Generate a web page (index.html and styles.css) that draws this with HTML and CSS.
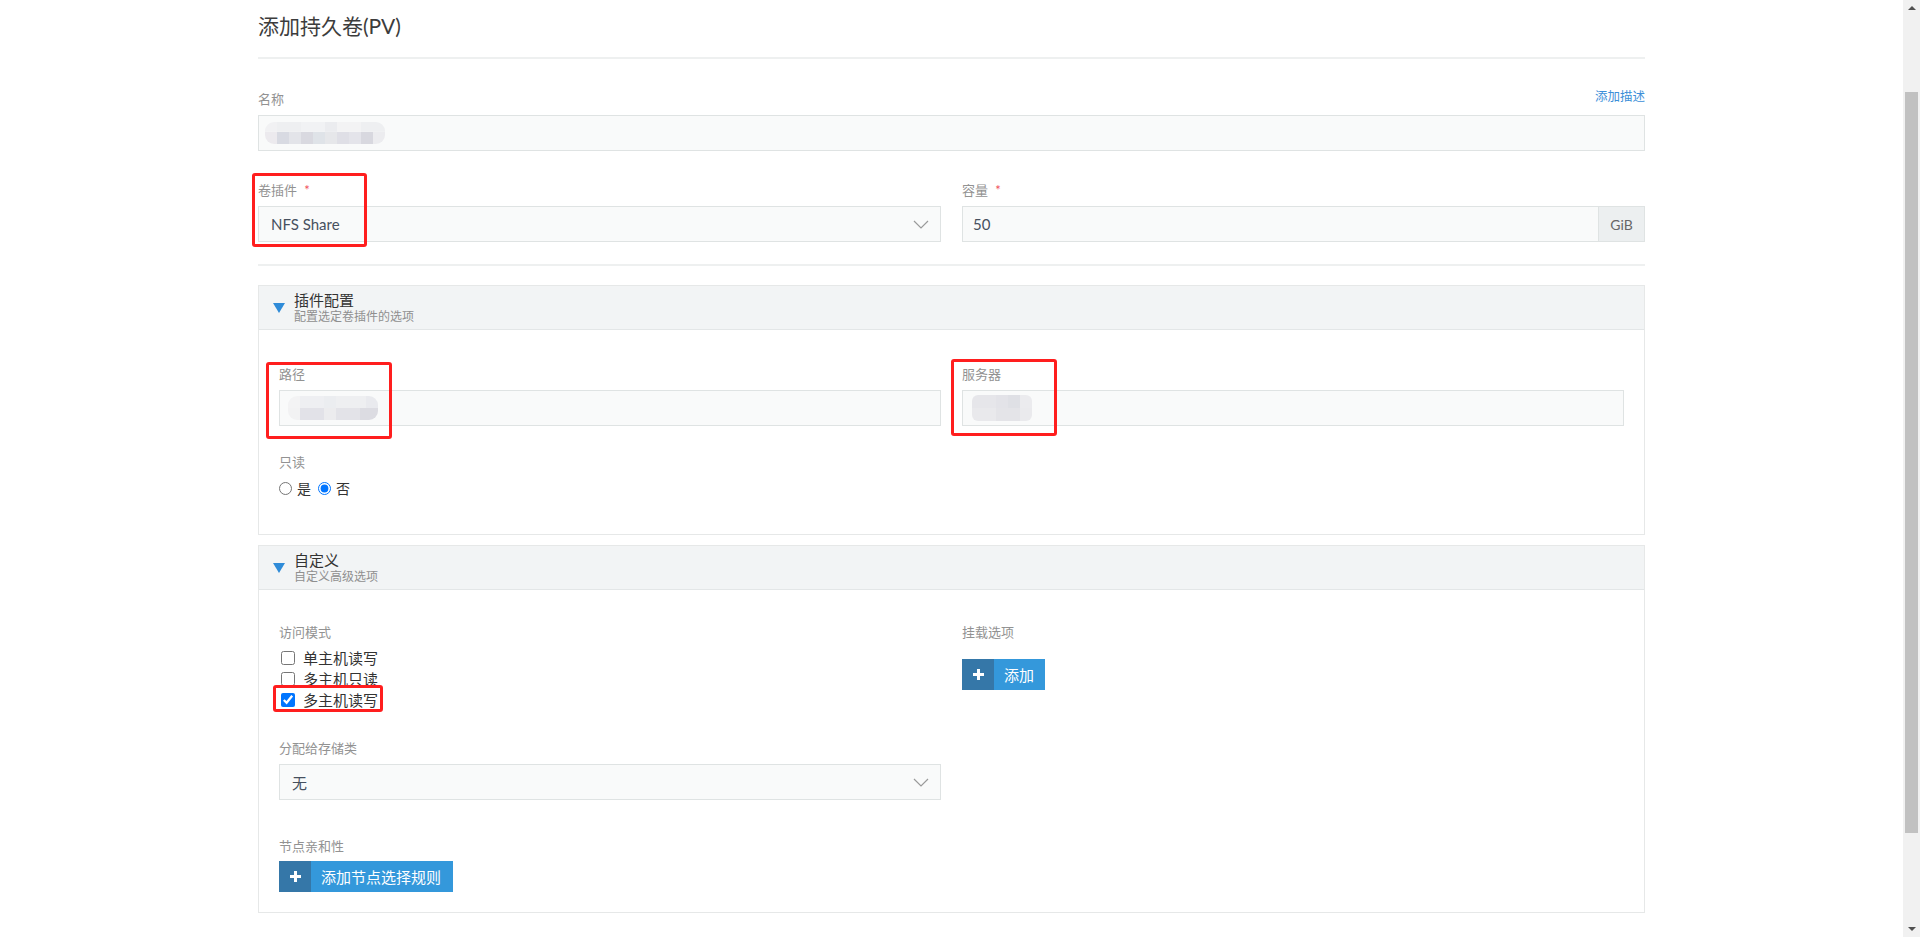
FILE: index.html
```html
<!DOCTYPE html>
<html lang="zh-CN">
<head>
  <meta charset="UTF-8" />
  <meta name="viewport" content="width=device-width, initial-scale=1" />
  <title>添加持久卷(PV)</title>
  <link rel="stylesheet" href="styles.css">
</head>
<body>

  <div class="screen">
    <main class="page">
      <div class="container">

        <div class="page-header">
          <h1>添加持久卷(PV)</h1>
        </div>

        <div class="field name-field">
          <div class="label-line">
            <label>名称</label>
            <a class="add-desc" href="#">添加描述</a>
          </div>
          <div class="form-control">
            <span class="mosaic mosaic-name"></span>
          </div>
        </div>

        <div class="row">
          <div class="col">
            <label>卷插件 <span class="req">*</span></label>
            <div class="form-control select">
              <span>NFS Share</span>
              <svg class="chevron" width="16" height="9" viewBox="0 0 16 9"><path d="M1 1 L8 8 L15 1" fill="none" stroke="#9a9a9a" stroke-width="1.2"/></svg>
            </div>
            <div class="mark mark-driver"></div>
          </div>
          <div class="col">
            <label>容量 <span class="req">*</span></label>
            <div class="input-group">
              <div class="form-control">50</div>
              <span class="addon">GiB</span>
            </div>
          </div>
        </div>

        <hr class="divider">

        <section class="panel">
          <div class="panel-head">
            <svg class="caret" width="12" height="10" viewBox="0 0 12 10"><path d="M0 0 H12 L6 10 Z" fill="#2f8bd8"/></svg>
            <div>
              <div class="panel-title">插件配置</div>
              <div class="panel-sub">配置选定卷插件的选项</div>
            </div>
          </div>
          <div class="panel-body plugin-body">
            <div class="row">
              <div class="col">
                <label>路径</label>
                <div class="form-control">
                  <span class="mosaic mosaic-path"></span>
                </div>
                <div class="mark mark-path"></div>
              </div>
              <div class="col">
                <label>服务器</label>
                <div class="form-control">
                  <span class="mosaic mosaic-server"></span>
                </div>
                <div class="mark mark-server"></div>
              </div>
            </div>
            <div class="readonly">
              <label>只读</label>
              <div class="radios">
                <input type="radio" name="ro" id="ro-yes"><span class="opt">是</span>
                <input type="radio" name="ro" id="ro-no" checked><span class="opt">否</span>
              </div>
            </div>
          </div>
        </section>

        <section class="panel">
          <div class="panel-head">
            <svg class="caret" width="12" height="10" viewBox="0 0 12 10"><path d="M0 0 H12 L6 10 Z" fill="#2f8bd8"/></svg>
            <div>
              <div class="panel-title">自定义</div>
              <div class="panel-sub">自定义高级选项</div>
            </div>
          </div>
          <div class="panel-body custom-body">
            <div class="row">
              <div class="col">
                <label>访问模式</label>
                <div class="checks">
                  <div class="check"><input type="checkbox"><span>单主机读写</span></div>
                  <div class="check"><input type="checkbox"><span>多主机只读</span></div>
                  <div class="check marked"><input type="checkbox" checked><span>多主机读写</span><div class="mark mark-rwx"></div></div>
                </div>

                <label class="gap-label">分配给存储类</label>
                <div class="form-control select">
                  <span>无</span>
                  <svg class="chevron" width="16" height="9" viewBox="0 0 16 9"><path d="M1 1 L8 8 L15 1" fill="none" stroke="#9a9a9a" stroke-width="1.2"/></svg>
                </div>

                <label class="gap-label affinity">节点亲和性</label>
                <button class="btn"><span class="btn-icon">
                  <svg width="11" height="11" viewBox="0 0 11 11"><path d="M4 0 H7 V4 H11 V7 H7 V11 H4 V7 H0 V4 H4 Z" fill="#fff"/></svg>
                </span><span class="btn-text">添加节点选择规则</span></button>
              </div>
              <div class="col">
                <label>挂载选项</label>
                <button class="btn mount-btn"><span class="btn-icon">
                  <svg width="11" height="11" viewBox="0 0 11 11"><path d="M4 0 H7 V4 H11 V7 H7 V11 H4 V7 H0 V4 H4 Z" fill="#fff"/></svg>
                </span><span class="btn-text">添加</span></button>
              </div>
            </div>
          </div>
        </section>

      </div>
    </main>

    <div class="scrollbar">
      <span class="arrow up"></span>
      <div class="track"><div class="thumb"></div></div>
      <span class="arrow down"></span>
    </div>
  </div>

</body>
</html>
```

FILE: styles.css
```css
* {
  box-sizing: border-box;
}
html, body {
  height: 100%;
}
body {
  margin: 0;
  overflow: hidden;
  background: #fff;
  font-family: "Lato", "Noto Sans CJK SC", sans-serif;
  color: #333;
}

.screen {
  display: flex;
  height: 100%;
}
.page {
  flex: 1;
  overflow: hidden;
}
.container {
  width: 1387px;
  margin: 0 auto;
  padding-top: 11px;
}

/* header */
.page-header {
  border-bottom: 2px solid #eef0f0;
  padding-bottom: 16px;
}
.page-header h1 {
  margin: 0;
  font-size: 21px;
  line-height: 30px;
  font-weight: normal;
  color: #3c3c3c;
}

label {
  display: block;
  font-size: 13px;
  line-height: 18px;
  color: #929292;
  margin-bottom: 7px;
}
.req {
  color: #f0505a;
  margin-left: 4px;
}

.name-field {
  margin-top: 31px;
}
.label-line {
  display: flex;
  justify-content: space-between;
  align-items: flex-start;
}
.add-desc {
  font-size: 12.5px;
  line-height: 14px;
  color: #3d8fd8;
  text-decoration: none;
}

.form-control {
  height: 36px;
  display: flex;
  align-items: center;
  padding: 0 12px;
  background: #f9fafa;
  border: 1px solid #dfe3e3;
  font-size: 15px;
  color: #46505e;
}
.select {
  justify-content: space-between;
}
.chevron {
  margin-right: -1px;
}

.row {
  display: flex;
  gap: 21px;
}
.col {
  flex: 1;
  position: relative;
}
.name-field + .row {
  margin-top: 30px;
}

.input-group {
  display: flex;
}
.input-group .form-control {
  flex: 1;
  padding-left: 10px;
}
.addon {
  width: 46px;
  height: 36px;
  line-height: 36px;
  text-align: center;
  background: #eceff0;
  border: 1px solid #dfe3e3;
  border-left: none;
  font-size: 14px;
  color: #666;
}

.divider {
  border: 0;
  border-top: 2px solid #eef0f0;
  margin: 22px 0 19px;
}

/* blurred values */
.mosaic {
  display: block;
  border-radius: 9px;
  filter: blur(0.6px);
}
.mosaic-name {
  width: 120px;
  height: 22px;
  margin-left: -6px;
  background:
    linear-gradient(to right, #f1f1f3 0 12px, #eeeff1 12px 36px, #f1f2f4 36px 60px, #ebecef 60px 72px, #f3f3f4 72px 96px, #eeeff1 96px 120px) top / 100% 45% no-repeat,
    linear-gradient(to right, #eceaee 0 12px, #d8dae2 12px 24px, #e3e4e9 24px 36px, #d9d9e0 36px 48px, #dfe3e8 48px 60px, #e6e7ea 60px 72px, #dfdfe6 72px 84px, #e4e4ea 84px 96px, #d8d8df 96px 108px, #ececef 108px 120px) bottom / 100% 55% no-repeat;
}
.mosaic-path {
  width: 90px;
  height: 24px;
  margin-left: -4px;
  background:
    linear-gradient(to right, #f3f3f4 0 12px, #eeeff2 12px 36px, #ebedf0 36px 48px, #eeeff1 48px 78px, #e9eaee 78px 90px) top / 100% 50% no-repeat,
    linear-gradient(to right, #f2f2f3 0 12px, #e2e2e8 12px 36px, #ececee 36px 48px, #e3e3e8 48px 72px, #dcdce2 72px 90px) bottom / 100% 50% no-repeat;
}
.mosaic-server {
  width: 60px;
  height: 26px;
  margin-left: -3px;
  border-radius: 6px;
  background:
    linear-gradient(to right, #e6e6ea 0 24px, #e3e3e8 24px 36px, #dfe0e5 36px 48px, #ebebee 48px 60px) top / 100% 50% no-repeat,
    linear-gradient(to right, #e9e9ec 0 24px, #e4e4e8 24px 48px, #eaeaed 48px 60px) bottom / 100% 50% no-repeat;
}

/* panels */
.panel {
  border: 1px solid #e6e8e8;
  margin-bottom: 10px;
}
.panel-head {
  height: 44px;
  display: flex;
  align-items: flex-start;
  padding: 5px 0 0 14px;
  background: #f2f4f5;
  border-bottom: 1px solid #e3e6e7;
}
.caret {
  margin-top: 12px;
  margin-right: 9px;
}
.panel-title {
  font-size: 15px;
  line-height: 18px;
  color: #333;
}
.panel-sub {
  font-size: 12px;
  line-height: 15px;
  color: #8f8f8f;
}
.panel-body {
  padding: 0 20px;
}
.plugin-body {
  padding-top: 35px;
  padding-bottom: 36px;
}
.custom-body {
  padding-top: 33px;
  padding-bottom: 20px;
}

.readonly {
  margin-top: 27px;
}
.readonly label {
  margin-bottom: 7px;
}
.radios {
  display: flex;
  align-items: center;
  height: 20px;
  font-size: 14px;
  color: #333;
}
.radios input {
  width: 13px;
  height: 13px;
  margin: 0 5px 0 0;
  accent-color: #0075ff;
}
.radios .opt {
  margin-right: 7px;
}

.checks {
  margin-top: -1px;
}
.check {
  display: flex;
  align-items: center;
  height: 21px;
  font-size: 15px;
  color: #333;
  position: relative;
  width: max-content;
}
.check input {
  width: 14px;
  height: 14px;
  margin: 0 8px 0 2px;
  accent-color: #0075ff;
}
.gap-label {
  margin-top: 29px;
}
.affinity {
  margin-top: 37px;
  margin-bottom: 6px;
}

.btn {
  display: inline-flex;
  height: 31px;
  padding: 0;
  border: 0;
  background: #3498db;
  color: #fff;
  font-family: inherit;
  font-size: 15px;
  cursor: pointer;
}
.btn-icon {
  width: 32px;
  display: flex;
  align-items: center;
  justify-content: center;
  background: #3577a8;
}
.btn-text {
  display: flex;
  align-items: center;
  padding: 0 12px 0 10px;
}
.mount-btn {
  margin-top: 11px;
}
.mount-btn .btn-text {
  padding-right: 11px;
}

/* red callouts */
.mark {
  position: absolute;
  border: 3px solid #ff1e1e;
  border-radius: 3px;
  pointer-events: none;
}
.mark-driver {
  left: -6px;
  top: -8px;
  width: 115px;
  height: 74px;
}
.mark-path {
  left: -13px;
  top: -3px;
  width: 126px;
  height: 77px;
}
.mark-server {
  left: -11px;
  top: -6px;
  width: 106px;
  height: 77px;
}
.mark-rwx {
  left: -6px;
  top: -4px;
  width: 110px;
  height: 27px;
}

/* window scrollbar */
.scrollbar {
  width: 17px;
  background: #f1f1f1;
  display: flex;
  flex-direction: column;
  align-items: center;
}
.track {
  flex: 1;
  width: 100%;
  padding: 82px 2px 94px;
}
.thumb {
  height: 100%;
  background: #c1c1c1;
}
.arrow {
  width: 0;
  height: 0;
  border-left: 4px solid transparent;
  border-right: 4px solid transparent;
}
.arrow.up {
  margin-top: 6px;
  border-bottom: 4px solid #505050;
}
.arrow.down {
  margin-bottom: 6px;
  border-top: 4px solid #505050;
}
```
